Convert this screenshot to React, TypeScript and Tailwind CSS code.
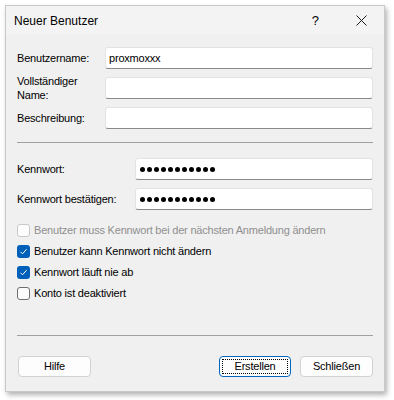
import React from "react";

const ui = { fontFamily: '"Liberation Sans", Arial, sans-serif' };
const title = { fontFamily: '"Liberation Sans", Arial, sans-serif' };

function TextBox({ children, className = "" }: { children?: React.ReactNode; className?: string }) {
  return (
    <div
      className={`h-[22px] flex-1 bg-white border border-[#e3e3e3] border-b-[#8a8a8a] rounded-[3px] flex items-center pl-[3px] text-[11px] text-black ${className}`}
    >
      {children}
    </div>
  );
}

function Dots() {
  return (
    <div className="flex gap-[2px] pl-[1px]">
      {Array.from({ length: 11 }).map((_, i) => (
        <div key={i} className="w-[5px] h-[5px] rounded-full bg-black" />
      ))}
    </div>
  );
}

function Check({ state, label }: { state: "checked" | "unchecked" | "disabled"; label: string }) {
  return (
    <div className="flex items-center h-[21px]">
      {state === "checked" ? (
        <div className="w-[13px] h-[13px] rounded-[3px] bg-[#005fb8] flex items-center justify-center">
          <svg width="9" height="9" viewBox="0 0 9 9">
            <path d="M1.5 4.8 L3.5 6.8 L7.6 2.2" fill="none" stroke="white" strokeWidth="1" />
          </svg>
        </div>
      ) : state === "unchecked" ? (
        <div className="w-[13px] h-[13px] rounded-[3px] bg-[#fbfbfb] border border-[#6f6f6f]" />
      ) : (
        <div className="w-[13px] h-[13px] rounded-[3px] bg-[#fdfdfd] border border-[#c8c8c8]" />
      )}
      <span
        className={`ml-[4px] text-[11px] tracking-[-0.2px] ${state === "disabled" ? "text-[#8f8f8f]" : "text-black"}`}
      >
        {label}
      </span>
    </div>
  );
}

function Button({ children, def = false }: { children: React.ReactNode; def?: boolean }) {
  return (
    <div
      className={`h-[21px] rounded-[4px] flex items-center justify-center text-[11px] text-black bg-[#fdfdfd] ${
        def ? "border border-[#0067c0] p-[2px]" : "border border-[#d2d2d2]"
      } ${def ? "w-[72px]" : "w-[73px]"}`}
    >
      {def ? (
        <div className="w-full h-full border border-dotted border-black flex items-center justify-center">{children}</div>
      ) : (
        children
      )}
    </div>
  );
}

export default function App() {
  return (
    <div className="w-[394px] h-[400px] bg-white pl-[5px] pt-[5px]" style={ui}>
      <div className="w-[380px] h-[387px] border border-[#c9c9c9] bg-[#f0f0f0] flex flex-col shadow-[2px_3px_5px_rgba(0,0,0,0.3)]">
        {/* Title bar */}
        <div className="h-[29px] bg-[#f3f3f3] flex items-center pl-[8px] pr-[17px]">
          <span className="text-[12px] text-black" style={title}>
            Neuer Benutzer
          </span>
          <div className="flex-1" />
          <span className="text-[13px] text-black mr-[37px]" style={title}>
            ?
          </span>
          <svg width="11" height="11" viewBox="0 0 11 11">
            <path d="M0.5 0.5 L10.5 10.5 M10.5 0.5 L0.5 10.5" stroke="#1a1a1a" strokeWidth="1" />
          </svg>
        </div>

        {/* Body */}
        <div className="flex-1 flex flex-col px-[11px] pt-[12px] text-[11px] tracking-[-0.2px]">
          <div className="flex items-center h-[22px]">
            <div className="w-[88px] text-black">Benutzername:</div>
            <TextBox>proxmoxxx</TextBox>
          </div>
          <div className="flex items-center h-[22px] mt-[8px]">
            <div className="w-[88px] leading-[14px] text-black">
              Vollständiger
              <br />
              Name:
            </div>
            <TextBox />
          </div>
          <div className="flex items-center h-[22px] mt-[8px]">
            <div className="w-[88px] text-black">Beschreibung:</div>
            <TextBox />
          </div>

          <div className="h-px bg-[#a0a0a0] mt-[13px]" />

          <div className="flex items-center h-[22px] mt-[15px]">
            <div className="w-[118px] text-black">Kennwort:</div>
            <TextBox>
              <Dots />
            </TextBox>
          </div>
          <div className="flex items-center h-[22px] mt-[8px]">
            <div className="w-[118px] text-black">Kennwort bestätigen:</div>
            <TextBox>
              <Dots />
            </TextBox>
          </div>

          <div className="flex flex-col mt-[10px]">
            <Check state="disabled" label="Benutzer muss Kennwort bei der nächsten Anmeldung ändern" />
            <Check state="checked" label="Benutzer kann Kennwort nicht ändern" />
            <Check state="checked" label="Kennwort läuft nie ab" />
            <Check state="unchecked" label="Konto ist deaktiviert" />
          </div>

          <div className="h-px bg-[#a0a0a0] mt-[31px]" />

          <div className="flex items-center mt-[20px] pl-[1px]">
            <Button>Hilfe</Button>
            <div className="flex-1" />
            <Button def>Erstellen</Button>
            <div className="w-[9px]" />
            <Button>Schließen</Button>
          </div>
        </div>
      </div>
    </div>
  );
}
